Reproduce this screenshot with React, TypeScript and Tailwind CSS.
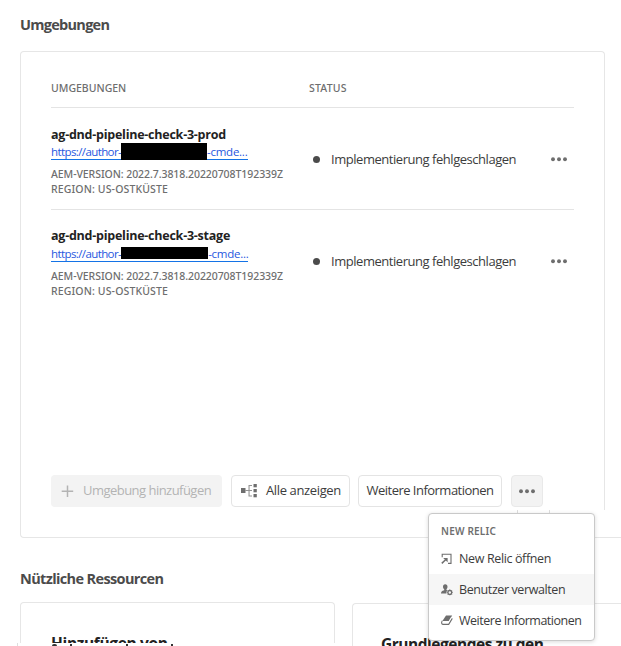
import React from "react";

const Dots = ({ className = "" }: { className?: string }) => (
  <svg className={className} width="16" height="5" viewBox="0 0 16 5" fill="currentColor">
    <circle cx="2" cy="2.2" r="1.95" />
    <circle cx="8" cy="2.2" r="1.95" />
    <circle cx="14" cy="2.2" r="1.95" />
  </svg>
);

const TreeIcon = () => (
  <svg width="17" height="14" viewBox="0 0 17 14" fill="#6e6e6e">
    <rect x="0" y="4" width="4.5" height="5" />
    <path d="M4.500 6h3V1H11v1.100H8.600V6H11v1.100H8.600v4.300H11v1.100H7.500V7.100h-3z" opacity=".75" />
    <rect x="12.500" y="0" width="3.300" height="3.300" />
    <rect x="12.500" y="5" width="3.300" height="3.300" />
    <rect x="12.500" y="10" width="3.300" height="3.300" />
  </svg>
);

const OpenIcon = () => (
  <svg width="12" height="12" viewBox="0 0 12 12" fill="none" stroke="#6e6e6e" strokeWidth="1.1">
    <path d="M1.200 4.200V1.200h8.800v9.200H7" />
    <path d="M.8 10.400L4.600 6.800" strokeWidth="1.500" />
    <path d="M2.200 4.900H6.600V9.300z" fill="#6e6e6e" stroke="none" />
  </svg>
);

const UserIcon = () => (
  <svg width="12" height="12" viewBox="0 0 12 12" fill="#6e6e6e">
    <path d="M4.200.3c1.500 0 2.300 1 2.300 2.500 0 1.100-.5 2-1 2.500v.8l1 .4C5.600 7.200 5.200 8.300 5.500 9.600H0C0 7.800.7 7 3.200 6.200v-.9C2.500 4.700 2 3.900 2 2.800 2 1.300 2.700.3 4.200.3z" />
    <circle cx="8.800" cy="8.400" r="1.900" fill="none" stroke="#6e6e6e" strokeWidth="1.300" />
    <path d="M8.800 5.400v1M8.800 10.400v1M5.800 8.400h1M10.800 8.400h1M6.700 6.300l.7.7M10.200 9.800l.7.7M10.900 6.300l-.7.7M7.400 9.800l-.7.7" stroke="#6e6e6e" strokeWidth=".8" />
  </svg>
);

const BookIcon = () => (
  <svg width="12" height="12" viewBox="0 0 12 12" fill="#6e6e6e">
    <path d="M5 .6h6.200L7.800 6H1.400z" />
    <path d="M1.300 5.800C.2 7.400.5 9.400 1.900 9.400H7.700L11.300 3.400" fill="none" stroke="#6e6e6e" strokeWidth="1.100" />
    <path d="M2.200 7.600h5L10.600 2" fill="none" stroke="#fff" strokeWidth=".7" />
  </svg>
);

type Env = { name: string; offset: string; bar: string; linkPad: string };

const envs: Env[] = [
  { name: "ag-dnd-pipeline-check-3-prod", offset: "pt-[18px] pb-0", bar: "h-[17px] w-[86px] -mt-px", linkPad: "w-[70px]" },
  { name: "ag-dnd-pipeline-check-3-stage", offset: "pt-[17px] pb-px", bar: "h-3 w-[87px] mt-px", linkPad: "w-[71px]" },
];

const EnvRow = ({ env, last }: { env: Env; last: boolean }) => (
  <div className={`flex h-[102px] ${last ? "" : "border-b border-[#e4e4e4]"}`}>
    <div className="w-[265px]">
      <div className={`h-9 whitespace-nowrap text-[12.500px] leading-[18px] font-bold tracking-[-0.24px] text-[#222] ${env.offset}`}>
        {env.name}
      </div>
      <div className="flex h-4 w-[197px] border-b border-[#1473e6] text-[11.500px] leading-[16px] text-[#1f57e0]">
        <span className={`${env.linkPad} whitespace-nowrap tracking-[-0.6px]`}>https://author-</span>
        <span className={`shrink-0 bg-black ${env.bar}`} />
        <span className="whitespace-nowrap tracking-[-0.25px]">-cmde...</span>
      </div>
      <div className="mt-[7px] whitespace-nowrap font-['Noto_Sans',sans-serif] text-[10.500px] leading-[15px] font-medium text-[#6e6e6e]">
        <div className="tracking-[-0.07px]">AEM-VERSION: 2022.7.3818.20220708T192339Z</div>
        <div className="tracking-[0.13px]">REGION: US-OSTKÜSTE</div>
      </div>
    </div>
    <div className="flex h-[103px] flex-1 items-center text-[#3c3c3c]">
      <span className="-ml-[3px] h-[7px] w-[7px] rounded-full bg-[#4b4b4b]" />
      <span className="ml-[11px] whitespace-nowrap text-[13px] tracking-[-0.46px]">
        Implementierung fehlgeschlagen
      </span>
      <Dots className="mr-[7px] ml-auto text-[#6e6e6e]" />
    </div>
  </div>
);

const MenuItem = ({ icon, label, track, active = false }: { icon: React.ReactNode; label: string; track: string; active?: boolean }) => (
  <div className={`flex h-[31px] items-center pl-3 ${active ? "bg-[#f6f6f6]" : ""}`}>
    {icon}
    <span className={`ml-[6px] pt-px whitespace-nowrap text-[12.500px] text-[#3c3c3c] ${track}`}>{label}</span>
  </div>
);

export default function App() {
  return (
    <div className="relative h-[646px] w-[621px] overflow-hidden bg-white pl-5 font-['Open_Sans','Noto_Sans',sans-serif]">
      <h2 className="h-[51px] pt-[15px] text-[14.500px] leading-5 font-bold tracking-[-0.72px] text-[#4b4b4b]">
        Umgebungen
      </h2>

      <section className="h-[459px] w-[585px] rounded-t-[4px] border-x border-t border-[#e6e6e6] px-[30px]">
        <div className="flex h-[56px] border-b border-[#e4e4e4] pt-7 font-['Noto_Sans',sans-serif] text-[10.500px] leading-4 font-medium text-[#6e6e6e]">
          <span className="w-[258px]">UMGEBUNGEN</span>
          <span className="tracking-[0.2px]">STATUS</span>
        </div>
        {envs.map((env, i) => (
          <EnvRow key={env.name} env={env} last={i === envs.length - 1} />
        ))}
        <div className="mt-[163px] flex text-[13px] text-[#3c3c3c]">
          <button className="flex h-8 w-[171px] items-center rounded-[4px] bg-[#f3f3f3] pl-[10px] whitespace-nowrap text-[#b3b3b3]">
            <svg width="13" height="13" viewBox="0 0 13 13" stroke="currentColor" strokeWidth="1.500">
              <path d="M6.500 .5v11.500M.7 6.200h11.500" />
            </svg>
            <span className="ml-[9px] tracking-[-0.53px]">Umgebung hinzufügen</span>
          </button>
          <button className="ml-[9px] flex h-8 w-[119px] items-center rounded-[4px] border border-[#e4e4e4] pl-[9px] whitespace-nowrap">
            <TreeIcon />
            <span className="ml-[8px] tracking-[-0.37px]">Alle anzeigen</span>
          </button>
          <button className="ml-2 h-8 w-[144px] rounded-[4px] border border-[#e4e4e4] whitespace-nowrap tracking-[-0.52px]">
            Weitere Informationen
          </button>
          <button className="ml-[9px] flex h-8 w-8 items-center justify-center rounded-[4px] border border-[#e9e9e9] bg-[#f3f3f3] text-[#6e6e6e]">
            <Dots />
          </button>
        </div>
      </section>
      <div className="flex h-[28px] rounded-bl-[4px] border-b border-l border-[#e6e6e6]">
        <span className="ml-[496px] h-[5px] w-[33px] border-x border-[#dedede]" />
      </div>

      <h2 className="h-[64px] pt-[31px] text-[14.500px] leading-5 font-bold tracking-[-0.63px] text-[#4b4b4b]">
        Nützliche Ressourcen
      </h2>
      <div className="flex">
        <div className="w-[315px]">
          <article className="h-[41px] overflow-hidden rounded-t-[4px] border-x border-t border-[#e6e6e6] pl-[30px] text-[15.500px] leading-5 font-bold tracking-[-0.35px] text-[#222]">
            <div className="pt-[30px] whitespace-nowrap">Hinzufügen von</div>
          </article>
          <div className="-ml-[3px] flex h-[3px] border-l border-[#dedede] pl-[33px]">
            <span className="mt-px ml-[1px] h-[2px] w-[5px] rounded-t bg-[#333]" />
            <span className="mt-px ml-[13px] h-[2px] w-[2px] bg-[#333]" />
            <span className="mt-px ml-[54px] h-[2px] w-[2px] bg-[#333]" />
            <span className="mt-px ml-[43px] h-[2px] w-[2px] bg-[#333]" />
          </div>
        </div>
        <article className="mt-px ml-[17px] h-[44px] flex-1 overflow-hidden rounded-tl-[4px] border-t border-l border-[#e6e6e6] pl-[28px] text-[15.500px] leading-5 font-bold tracking-[-0.48px] text-[#222]">
          <div className="pt-[30px] whitespace-nowrap">Grundlegendes zu den</div>
        </article>
      </div>

      <div className="absolute top-[513px] left-[428px] h-[128px] w-[167px] rounded-[4px] border border-[#c9c9c9] bg-white shadow-[0_1px_4px_rgba(0,0,0,0.15)]">
        <div className="h-[29px] pt-[9px] pl-3 font-['Noto_Sans',sans-serif] text-[10px] leading-4 font-semibold tracking-[0.2px] text-[#6e6e6e]">
          NEW RELIC
        </div>
        <MenuItem icon={<OpenIcon />} label="New Relic öffnen" track="tracking-[-0.37px]" />
        <MenuItem icon={<UserIcon />} label="Benutzer verwalten" track="tracking-[-0.4px]" active />
        <MenuItem icon={<BookIcon />} label="Weitere Informationen" track="tracking-[-0.48px]" />
      </div>
    </div>
  );
}
